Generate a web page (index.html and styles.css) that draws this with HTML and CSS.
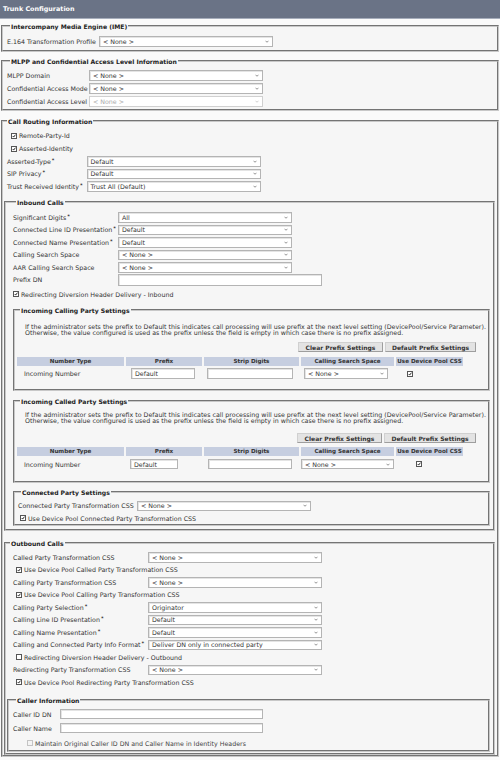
FILE: index.html
```html
<!DOCTYPE html>
<html>
<head>
<meta charset="utf-8">
<title>Trunk Configuration</title>
<link rel="stylesheet" href="styles.css">
</head>
<body>
<div class="page">
  <div class="titlebar">Trunk Configuration</div>

  <fieldset class="fs fs-ime">
    <legend>Intercompany Media Engine (IME)</legend>
    <div class="row r125"><span class="lbl w-ime">E.164 Transformation Profile</span><span class="sel"><span>&lt; None &gt;</span><svg class="chev" viewBox="0 0 8 5"><path d="M1 1 L4 4 L7 1"/></svg></span></div>
  </fieldset>

  <fieldset class="fs fs-mlpp">
    <legend>MLPP and Confidential Access Level Information</legend>
    <div class="row r13"><span class="lbl w-mlpp">MLPP Domain</span><span class="sel"><span>&lt; None &gt;</span><svg class="chev" viewBox="0 0 8 5"><path d="M1 1 L4 4 L7 1"/></svg></span></div>
    <div class="row r13"><span class="lbl w-mlpp">Confidential Access Mode</span><span class="sel"><span>&lt; None &gt;</span><svg class="chev" viewBox="0 0 8 5"><path d="M1 1 L4 4 L7 1"/></svg></span></div>
    <div class="row r13"><span class="lbl w-mlpp">Confidential Access Level</span><span class="sel disabled"><span>&lt; None &gt;</span><svg class="chev" viewBox="0 0 8 5"><path d="M1 1 L4 4 L7 1"/></svg></span></div>
  </fieldset>

  <fieldset class="fs fs-route">
    <legend>Call Routing Information</legend>
    <div class="chk cr"><span class="cb on"><svg viewBox="0 0 6 6"><path d="M1 3 L2.5 4.6 L5.2 1"/></svg></span>Remote-Party-Id</div>
    <div class="chk cr"><span class="cb on"><svg viewBox="0 0 6 6"><path d="M1 3 L2.5 4.6 L5.2 1"/></svg></span>Asserted-Identity</div>
    <div class="row r125 rr"><span class="lbl w-route">Asserted-Type<sup>*</sup></span><span class="sel"><span>Default</span><svg class="chev" viewBox="0 0 8 5"><path d="M1 1 L4 4 L7 1"/></svg></span></div>
    <div class="row r125 rr"><span class="lbl w-route">SIP Privacy<sup>*</sup></span><span class="sel"><span>Default</span><svg class="chev" viewBox="0 0 8 5"><path d="M1 1 L4 4 L7 1"/></svg></span></div>
    <div class="row r125 rr"><span class="lbl w-route">Trust Received Identity<sup>*</sup></span><span class="sel"><span>Trust All (Default)</span><svg class="chev" viewBox="0 0 8 5"><path d="M1 1 L4 4 L7 1"/></svg></span></div>

    <fieldset class="fs fs-in">
      <legend>Inbound Calls</legend>
      <div class="row r125"><span class="lbl w-in">Significant Digits<sup>*</sup></span><span class="sel"><span>All</span><svg class="chev" viewBox="0 0 8 5"><path d="M1 1 L4 4 L7 1"/></svg></span></div>
      <div class="row r125"><span class="lbl w-in">Connected Line ID Presentation<sup>*</sup></span><span class="sel"><span>Default</span><svg class="chev" viewBox="0 0 8 5"><path d="M1 1 L4 4 L7 1"/></svg></span></div>
      <div class="row r125"><span class="lbl w-in">Connected Name Presentation<sup>*</sup></span><span class="sel"><span>Default</span><svg class="chev" viewBox="0 0 8 5"><path d="M1 1 L4 4 L7 1"/></svg></span></div>
      <div class="row r125"><span class="lbl w-in">Calling Search Space</span><span class="sel"><span>&lt; None &gt;</span><svg class="chev" viewBox="0 0 8 5"><path d="M1 1 L4 4 L7 1"/></svg></span></div>
      <div class="row r125"><span class="lbl w-in">AAR Calling Search Space</span><span class="sel"><span>&lt; None &gt;</span><svg class="chev" viewBox="0 0 8 5"><path d="M1 1 L4 4 L7 1"/></svg></span></div>
      <div class="row r125"><span class="lbl w-in">Prefix DN</span><span class="inp w204 tall"></span></div>
      <div class="chk ci"><span class="cb on"><svg viewBox="0 0 6 6"><path d="M1 3 L2.5 4.6 L5.2 1"/></svg></span>Redirecting Diversion Header Delivery - Inbound</div>

      <fieldset class="fs fs-sub fs-icp">
        <legend>Incoming Calling Party Settings</legend>
        <p class="note">If the administrator sets the prefix to Default this indicates call processing will use prefix at the next level setting (DevicePool/Service Parameter).<br>Otherwise, the value configured is used as the prefix unless the field is empty in which case there is no prefix assigned.</p>
        <div class="btns"><span class="btn">Clear Prefix Settings</span><span class="btn">Default Prefix Settings</span></div>
        <div class="ptable">
          <div class="th">Number Type</div><div class="th">Prefix</div><div class="th">Strip Digits</div><div class="th">Calling Search Space</div><div class="th">Use Device Pool CSS</div>
          <div class="td td-name">Incoming Number</div>
          <div class="td"><span class="inp p1">Default</span></div>
          <div class="td"><span class="inp s1"></span></div>
          <div class="td"><span class="sel c1"><span>&lt; None &gt;</span><svg class="chev" viewBox="0 0 8 5"><path d="M1 1 L4 4 L7 1"/></svg></span></div>
          <div class="td"><span class="cb on k1"><svg viewBox="0 0 6 6"><path d="M1 3 L2.5 4.6 L5.2 1"/></svg></span></div>
        </div>
      </fieldset>

      <fieldset class="fs fs-sub fs-icd">
        <legend>Incoming Called Party Settings</legend>
        <p class="note">If the administrator sets the prefix to Default this indicates call processing will use prefix at the next level setting (DevicePool/Service Parameter).<br>Otherwise, the value configured is used as the prefix unless the field is empty in which case there is no prefix assigned.</p>
        <div class="btns"><span class="btn">Clear Prefix Settings</span><span class="btn">Default Prefix Settings</span></div>
        <div class="ptable">
          <div class="th">Number Type</div><div class="th">Prefix</div><div class="th">Strip Digits</div><div class="th">Calling Search Space</div><div class="th">Use Device Pool CSS</div>
          <div class="td td-name">Incoming Number</div>
          <div class="td"><span class="inp p2">Default</span></div>
          <div class="td"><span class="inp s2"></span></div>
          <div class="td"><span class="sel c2"><span>&lt; None &gt;</span><svg class="chev" viewBox="0 0 8 5"><path d="M1 1 L4 4 L7 1"/></svg></span></div>
          <div class="td"><span class="cb on k2"><svg viewBox="0 0 6 6"><path d="M1 3 L2.5 4.6 L5.2 1"/></svg></span></div>
        </div>
      </fieldset>

      <fieldset class="fs fs-sub fs-conn">
        <legend>Connected Party Settings</legend>
        <div class="row r125"><span class="lbl w-conn">Connected Party Transformation CSS</span><span class="sel"><span>&lt; None &gt;</span><svg class="chev" viewBox="0 0 8 5"><path d="M1 1 L4 4 L7 1"/></svg></span></div>
        <div class="chk cc"><span class="cb on"><svg viewBox="0 0 6 6"><path d="M1 3 L2.5 4.6 L5.2 1"/></svg></span>Use Device Pool Connected Party Transformation CSS</div>
      </fieldset>
    </fieldset>

    <fieldset class="fs fs-out">
      <legend>Outbound Calls</legend>
      <div class="row r125 ro"><span class="lbl w-out">Called Party Transformation CSS</span><span class="sel"><span>&lt; None &gt;</span><svg class="chev" viewBox="0 0 8 5"><path d="M1 1 L4 4 L7 1"/></svg></span></div>
      <div class="chk co"><span class="cb on"><svg viewBox="0 0 6 6"><path d="M1 3 L2.5 4.6 L5.2 1"/></svg></span>Use Device Pool Called Party Transformation CSS</div>
      <div class="row r125 ro"><span class="lbl w-out">Calling Party Transformation CSS</span><span class="sel"><span>&lt; None &gt;</span><svg class="chev" viewBox="0 0 8 5"><path d="M1 1 L4 4 L7 1"/></svg></span></div>
      <div class="chk co"><span class="cb on"><svg viewBox="0 0 6 6"><path d="M1 3 L2.5 4.6 L5.2 1"/></svg></span>Use Device Pool Calling Party Transformation CSS</div>
      <div class="row r125 ro"><span class="lbl w-out">Calling Party Selection<sup>*</sup></span><span class="sel"><span>Originator</span><svg class="chev" viewBox="0 0 8 5"><path d="M1 1 L4 4 L7 1"/></svg></span></div>
      <div class="row r125 ro"><span class="lbl w-out">Calling Line ID Presentation<sup>*</sup></span><span class="sel"><span>Default</span><svg class="chev" viewBox="0 0 8 5"><path d="M1 1 L4 4 L7 1"/></svg></span></div>
      <div class="row r125 ro"><span class="lbl w-out">Calling Name Presentation<sup>*</sup></span><span class="sel"><span>Default</span><svg class="chev" viewBox="0 0 8 5"><path d="M1 1 L4 4 L7 1"/></svg></span></div>
      <div class="row r125 ro"><span class="lbl w-out">Calling and Connected Party Info Format<sup>*</sup></span><span class="sel"><span>Deliver DN only in connected party</span><svg class="chev" viewBox="0 0 8 5"><path d="M1 1 L4 4 L7 1"/></svg></span></div>
      <div class="chk co"><span class="cb"></span>Redirecting Diversion Header Delivery - Outbound</div>
      <div class="row r125 ro"><span class="lbl w-out">Redirecting Party Transformation CSS</span><span class="sel"><span>&lt; None &gt;</span><svg class="chev" viewBox="0 0 8 5"><path d="M1 1 L4 4 L7 1"/></svg></span></div>
      <div class="chk co"><span class="cb on"><svg viewBox="0 0 6 6"><path d="M1 3 L2.5 4.6 L5.2 1"/></svg></span>Use Device Pool Redirecting Party Transformation CSS</div>

      <fieldset class="fs fs-caller">
        <legend>Caller Information</legend>
        <div class="row r14"><span class="lbl w-caller">Caller ID DN</span><span class="inp w203"></span></div>
        <div class="row r14"><span class="lbl w-caller">Caller Name</span><span class="inp w203"></span></div>
        <div class="chk cd"><span class="cb dis"></span>Maintain Original Caller ID DN and Caller Name in Identity Headers</div>
      </fieldset>
    </fieldset>
  </fieldset>
</div>
</body>
</html>
```

FILE: styles.css
```css
* { box-sizing: border-box; }
html, body { margin: 0; padding: 0; }
body {
  background: #fafafa;
  font-family: "DejaVu Sans", Verdana, sans-serif;
  font-size: 6.3px;
  color: #333;
  width: 500px;
  height: 760px;
  overflow: hidden;
}
.page { padding: 0 1px; }

.titlebar {
  margin: 0 -1px;
  height: 19px;
  background: #6a7386;
  border-bottom: 1px solid #a6adbb;
  color: #fff;
  font-weight: bold;
  font-size: 6.4px;
  line-height: 19px;
  padding-left: 3px;
}

/* fieldsets */
.fs {
  margin: 0;
  padding: 0;
  border: 2px groove #c8c8c8;
  background: #f6f6f6;
  min-width: 0;
}
.fs legend {
  font-weight: bold;
  color: #222;
  font-size: 6.1px;
  line-height: 7px;
  padding: 0 1px;
  margin-left: 3px;
}
.fs-ime { margin-top: 3.5px; padding: 5.5px 0 2px 4px; }
.fs-mlpp { margin-top: 6px; padding: 4.5px 0 1px 4px; }
.fs-route { margin-top: 6.5px; padding: 4.5px 2px 0 1px; }
.fs-in { margin-top: 6px; padding: 5.5px 3px 3px 7px; }
.fs-sub { padding: 0 2px 0 2px; }
.fs-icp { margin-top: 6.5px; padding-bottom: 9.5px; }
.fs-icd { margin-top: 6.5px; padding-bottom: 11px; }
.fs-conn { margin-top: 5.5px; padding-top: 4px; padding-left: 3px; }
.fs-out { margin-top: 8.5px; padding: 4.5px 3px 1px 1px; }
.fs-caller { margin-top: 8px; padding: 3.5px 2px 1px 4px; }

/* rows */
.row { display: flex; align-items: center; }
.r125 { height: 12.5px; }
.r13 { height: 13px; }
.r14 { height: 14px; }
.rr { margin-left: 3px; }
.ro { margin-left: 6px; }
.lbl { flex: none; white-space: nowrap; }
.lbl sup {
  font-size: 5px;
  font-weight: bold;
  vertical-align: top;
  line-height: 4px;
  margin-left: 1px;
  color: #222;
}
.w-ime { width: 92px; }
.w-mlpp { width: 82px; }
.w-route { width: 79.5px; }
.w-in { width: 105px; }
.w-conn { width: 119px; }
.w-out { width: 135px; }
.w-caller { width: 47px; }

/* select boxes */
.sel {
  flex: none;
  width: 174px;
  height: 10.5px;
  background: #fff;
  border: 1px solid #b4b4b4;
  box-shadow: inset 1px 1px 0 #e4e4e4;
  display: flex;
  align-items: center;
  justify-content: space-between;
  padding: 0 3px 0 3px;
  color: #333;
  white-space: nowrap;
  overflow: hidden;
}
.chev { width: 4px; height: 3px; flex: none; }
.chev path { fill: none; stroke: #666; stroke-width: 1.4; }
.sel.disabled { color: #aaa; border-color: #d0d0d0; box-shadow: none; }
.sel.disabled .chev path { stroke: #bbb; }

/* inputs */
.inp {
  display: flex;
  align-items: center;
  flex: none;
  height: 10.5px;
  background: #fff;
  border: 1px solid #b4b4b4;
  box-shadow: inset 1px 1px 0 #e4e4e4;
  padding-left: 3px;
  color: #333;
}
.inp.tall { height: 11.5px; }
.w204 { width: 204px; }
.w203 { width: 203px; }

/* checkboxes */
.chk { display: flex; align-items: center; white-space: nowrap; }
.cb {
  flex: none;
  width: 6px;
  height: 6px;
  border: 1px solid #555;
  background: #fff;
  margin-right: 2px;
  display: inline-flex;
}
.cb svg { width: 4px; height: 4px; }
.cb svg path { fill: none; stroke: #111; stroke-width: 1.3; }
.cb.dis { border-color: #c4c4c4; background: #f4f4f4; }
.cr { height: 13px; margin-left: 7px; }
.ci { height: 12px; margin-top: 2px; }
.cc { height: 12px; margin-left: 2px; }
.co { height: 12.5px; margin-left: 9px; }
.cd { height: 12px; margin-top: 2px; margin-left: 14px; color: #444; }

/* note text */
.note {
  margin: 0;
  padding-left: 8px;
  line-height: 6px;
  color: #333;
  white-space: nowrap;
}
.fs-icp .note { margin-top: 10.5px; }
.fs-icd .note { margin-top: 7px; }

/* buttons */
.btns {
  display: flex;
  justify-content: flex-end;
  gap: 2px;
  padding-right: 10px;
  height: 10px;
}
.fs-icp .btns { margin-top: 6px; }
.fs-icd .btns { margin-top: 9.5px; }
.btn {
  display: flex;
  align-items: center;
  justify-content: center;
  height: 10px;
  padding: 0 2px;
  background: #e3e3e3;
  border: 1px solid #9e9e9e;
  border-top-color: #d0d0d0;
  border-left-color: #d0d0d0;
  font-weight: bold;
  font-size: 6px;
  color: #333;
  white-space: nowrap;
}
.fs-icp .btn:first-child { width: 85px; }
.fs-icp .btn:last-child { width: 91px; }
.fs-icd .btn:first-child { width: 85px; }
.fs-icd .btn:last-child { width: 92px; }

/* prefix table */
.ptable {
  display: grid;
  grid-template-columns: 107px 76px 95px 93px 67px;
  column-gap: 2px;
  row-gap: 2px;
  margin-left: 0;
}
.fs-icp .ptable { margin-top: 5px; }
.fs-icd .ptable { margin-top: 4px; }
.th {
  background: #c6cee0;
  font-weight: bold;
  font-size: 5.6px;
  text-align: center;
  color: #333;
  height: 8.5px;
  line-height: 8.5px;
  white-space: nowrap;
}
.fs-icd .th { height: 9px; line-height: 9px; }
.td { display: flex; align-items: center; height: 12px; }
.td-name { padding-left: 7px; white-space: nowrap; }
.p1 { width: 64px; margin-left: 5px; }
.s1 { width: 86px; margin-left: 3px; }
.c1 { width: 84px; margin-left: 3px; }
.k1 { margin-left: 11px; }
.p2 { width: 48px; margin-left: 4px; }
.s2 { width: 84px; margin-left: 4px; }
.c2 { width: 93px; margin-left: 0; }
.k2 { margin-left: 20px; }
```
